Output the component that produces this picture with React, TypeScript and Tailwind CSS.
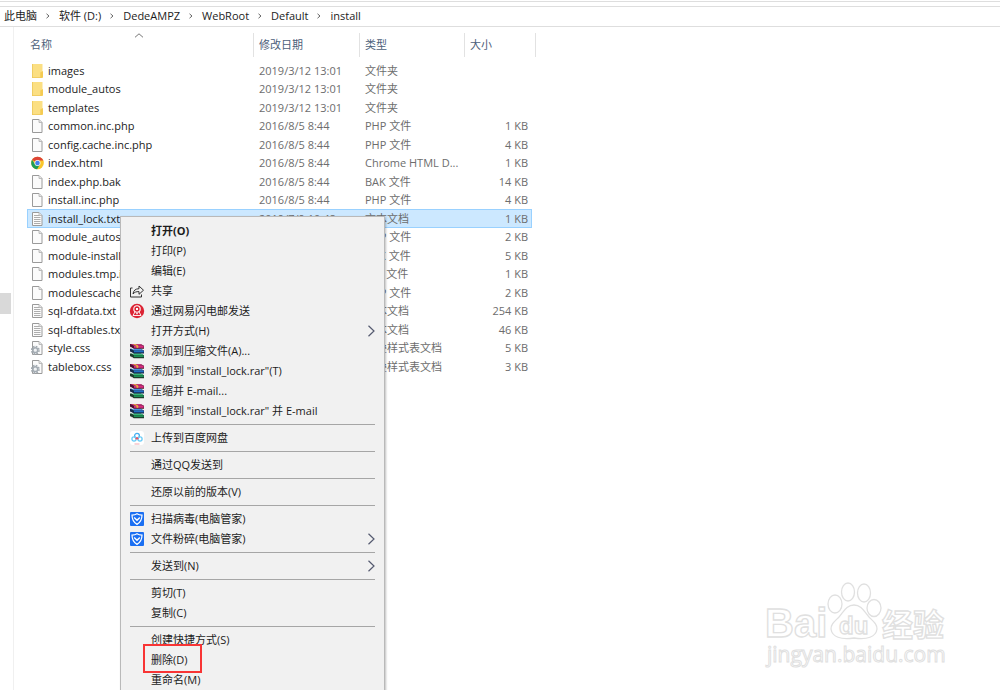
import { Fragment, ReactNode } from "react";

type FileKind = "folder" | "page" | "text" | "chrome" | "css";

interface FileEntry {
  name: string;
  kind: FileKind;
  date: string;
  type: string;
  size?: string;
  selected?: boolean;
}

interface MenuEntry {
  label: string;
  icon?: "share" | "mail" | "rar" | "cloud" | "shield";
  bold?: boolean;
  submenu?: boolean;
  marked?: boolean;
}

const crumbs = ["此电脑", "软件 (D:)", "DedeAMPZ", "WebRoot", "Default", "install"];

const files: FileEntry[] = [
  { name: "images", kind: "folder", date: "2019/3/12 13:01", type: "文件夹" },
  { name: "module_autos", kind: "folder", date: "2019/3/12 13:01", type: "文件夹" },
  { name: "templates", kind: "folder", date: "2019/3/12 13:01", type: "文件夹" },
  { name: "common.inc.php", kind: "page", date: "2016/8/5 8:44", type: "PHP 文件", size: "1 KB" },
  { name: "config.cache.inc.php", kind: "page", date: "2016/8/5 8:44", type: "PHP 文件", size: "4 KB" },
  { name: "index.html", kind: "chrome", date: "2016/8/5 8:44", type: "Chrome HTML D...", size: "1 KB" },
  { name: "index.php.bak", kind: "page", date: "2016/8/5 8:44", type: "BAK 文件", size: "14 KB" },
  { name: "install.inc.php", kind: "page", date: "2016/8/5 8:44", type: "PHP 文件", size: "4 KB" },
  { name: "install_lock.txt", kind: "text", date: "2019/7/9 10:48", type: "文本文档", size: "1 KB", selected: true },
  { name: "module_autos.php", kind: "page", date: "2016/8/5 8:44", type: "PHP 文件", size: "2 KB" },
  { name: "module-install.bak", kind: "page", date: "2016/8/5 8:44", type: "BAK 文件", size: "5 KB" },
  { name: "modules.tmp.inc", kind: "page", date: "2016/8/5 8:44", type: "INC 文件", size: "1 KB" },
  { name: "modulescache.php", kind: "page", date: "2016/8/5 8:44", type: "PHP 文件", size: "2 KB" },
  { name: "sql-dfdata.txt", kind: "text", date: "2016/8/5 8:44", type: "文本文档", size: "254 KB" },
  { name: "sql-dftables.txt", kind: "text", date: "2016/8/5 8:44", type: "文本文档", size: "46 KB" },
  { name: "style.css", kind: "css", date: "2016/8/5 8:44", type: "层叠样式表文档", size: "5 KB" },
  { name: "tablebox.css", kind: "css", date: "2016/8/5 8:44", type: "层叠样式表文档", size: "3 KB" },
];

const menuGroups: MenuEntry[][] = [
  [
    { label: "打开(O)", bold: true },
    { label: "打印(P)" },
    { label: "编辑(E)" },
    { label: "共享", icon: "share" },
    { label: "通过网易闪电邮发送", icon: "mail" },
    { label: "打开方式(H)", submenu: true },
    { label: "添加到压缩文件(A)...", icon: "rar" },
    { label: '添加到 "install_lock.rar"(T)', icon: "rar" },
    { label: "压缩并 E-mail...", icon: "rar" },
    { label: '压缩到 "install_lock.rar" 并 E-mail', icon: "rar" },
  ],
  [{ label: "上传到百度网盘", icon: "cloud" }],
  [{ label: "通过QQ发送到" }],
  [{ label: "还原以前的版本(V)" }],
  [
    { label: "扫描病毒(电脑管家)", icon: "shield" },
    { label: "文件粉碎(电脑管家)", icon: "shield", submenu: true },
  ],
  [{ label: "发送到(N)", submenu: true }],
  [{ label: "剪切(T)" }, { label: "复制(C)" }],
  [
    { label: "创建快捷方式(S)" },
    { label: "删除(D)", marked: true },
    { label: "重命名(M)" },
  ],
];

const Page = ({ children }: { children?: ReactNode }) => (
  <svg width="14" height="16" viewBox="0 0 14 16" aria-hidden="true">
    <path d="M1.5 1.500h6.500l3 3v10h-9.500z" fill="#fbfbfb" stroke="#9a9a9a" />
    <path d="M8 1.500v3h3" fill="#e4e4e4" stroke="#b0b0b0" strokeWidth="0.800" />
    {children}
  </svg>
);

const FileIcon = ({ kind }: { kind: FileKind }) => {
  if (kind === "folder") {
    return (
      <svg width="14" height="16" viewBox="0 0 14 16" aria-hidden="true">
        <path d="M1 1h10.500v14H1z" fill="#fbdf83" />
        <path d="M1 1h1v14H1z" fill="#f0cd62" />
        <path d="M1 14.200h10.500v.8H1z" fill="#efc95c" />
        <path d="M9.300 9.500L12 8v6.200L9.300 15z" fill="#f5cb52" />
      </svg>
    );
  }
  if (kind === "chrome") {
    return (
      <svg width="14" height="16" viewBox="0 0 14 16" aria-hidden="true">
        <circle cx="6.500" cy="8" r="6.300" fill="#f9c62b" />
        <path d="M6.500 8L1.040 4.850A6.300 6.300 0 0 1 11.960 4.850L12.400 5.600H6.500z" fill="#dd4437" />
        <path d="M1.040 4.850A6.300 6.300 0 0 0 6.100 14.300L8.900 9.600 6.500 8 4 9.300z" fill="#1f9d58" />
        <circle cx="6.500" cy="8" r="3" fill="#f5f5f5" />
        <circle cx="6.500" cy="8" r="2.300" fill="#4381ee" />
      </svg>
    );
  }
  if (kind === "text") {
    return (
      <Page>
        <path d="M3 4.500h5M3 6.500h6.500M3 8.500h6.500M3 10.500h6.500M3 12.500h6.500" stroke="#adadad" />
      </Page>
    );
  }
  if (kind === "css") {
    return (
      <Page>
        <circle cx="4.300" cy="10.200" r="3.700" fill="none" stroke="#a3abb2" strokeWidth="1.600" strokeDasharray="1.700 1.200" />
        <circle cx="4.300" cy="10.200" r="2.400" fill="#f0f2f4" stroke="#a3abb2" strokeWidth="1.500" />
      </Page>
    );
  }
  return <Page />;
};

const MenuIcon = ({ icon }: { icon: MenuEntry["icon"] }) => {
  switch (icon) {
    case "share":
      return (
        <svg width="16" height="16" viewBox="0 0 16 16" fill="none" stroke="#333" aria-hidden="true">
          <path d="M1.500 5v9h11v-2.500M1.500 5h2" />
          <path d="M4 11c.5-3.600 2.400-5.200 6-5.300V3l4.500 4.200L10 11.300V8.600C7.200 8.500 5.500 9.200 4 11z" />
        </svg>
      );
    case "mail":
      return (
        <svg width="16" height="16" viewBox="0 0 16 16" aria-hidden="true">
          <circle cx="8" cy="8" r="7.200" fill="#dc2434" />
          <circle cx="8" cy="6" r="3.200" fill="none" stroke="#fff" strokeWidth="1.100" />
          <path d="M7 5h2v2H7z" fill="#fff" />
          <path d="M6 8.800l-2 3.700h8l-2-3.700M7 10.700h2" fill="none" stroke="#fff" strokeWidth="0.900" />
        </svg>
      );
    case "rar":
      return (
        <svg width="16" height="16" viewBox="0 0 16 16" aria-hidden="true">
          <path d="M1 10.500h10.500l3.500 1.800v3H4.500L1 13.500z" fill="#1c3c2c" />
          <path d="M1.500 10.300h10l3.200 1.700H5z" fill="#38b878" />
          <path d="M5 12.300h9.700v1.600H5z" fill="#1e9a58" />
          <path d="M1 5.800h10.500L15 7.600v3H4.500L1 8.800z" fill="#15294a" />
          <path d="M1.500 5.700h10l3.200 1.700H5z" fill="#4a93dc" />
          <path d="M5 7.700h9.700v1.600H5z" fill="#1f6cc4" />
          <path d="M1 1h10.500L15 2.800v3H4.500L1 4z" fill="#4e0f30" />
          <path d="M1.500 1h10l3.200 1.800H5z" fill="#c9377c" />
          <path d="M5 3h9.700v1.800H5z" fill="#d62d80" />
          <path d="M1.300 4.200L4.500 6M1.300 9l3.200 1.800M1.300 13.600l3.200 1.800" stroke="#f0f0f0" strokeWidth="0.900" />
          <path d="M4 1h2.300l3 1.800v2H7.500V3z" fill="#e5b93c" />
        </svg>
      );
    case "cloud":
      return (
        <svg width="16" height="16" viewBox="0 0 16 16" fill="none" aria-hidden="true">
          <rect x="1" y="1" width="14" height="14" rx="3" fill="#fff" />
          <circle cx="8" cy="5.800" r="2.400" stroke="#45aef0" strokeWidth="1.300" />
          <circle cx="5" cy="9" r="2.100" stroke="#68cbf7" strokeWidth="1.300" />
          <circle cx="11" cy="9" r="2.100" stroke="#68cbf7" strokeWidth="1.300" />
          <path d="M6.700 9.300L8 7.800l1.300 1.500" stroke="#ee5160" strokeWidth="1.300" />
          <path d="M5.500 14h5" stroke="#f3a6ae" />
        </svg>
      );
    case "shield":
      return (
        <svg width="16" height="16" viewBox="0 0 16 16" aria-hidden="true">
          <rect x="1" y="1" width="14" height="14" rx="1" fill="#1b6ff2" />
          <path d="M8 2.800c1.600 1 3.200 1.300 5 1.300 0 4.400-1.200 7.200-5 9.300-3.800-2.100-5-4.900-5-9.300 1.800 0 3.400-.3 5-1.300z" fill="none" stroke="#fff" strokeWidth="1.200" />
          <path d="M5.200 6.500L8 9.200l2.800-2.700" fill="none" stroke="#fff" strokeWidth="1.400" />
        </svg>
      );
    default:
      return null;
  }
};

const Breadcrumb = () => (
  <nav className="mt-1 flex h-[21px] items-center border-y border-[#dedede] pb-[2px] pl-1 text-[#1c1c1c]">
    {crumbs.map((crumb, i) => (
      <Fragment key={crumb}>
        {i > 0 && (
          <svg className="mx-2" width="6" height="6" viewBox="0 0 6 6" fill="none" stroke="#666" aria-hidden="true">
            <path d="M1.500 .8L4 3 1.500 5.200" />
          </svg>
        )}
        <a href="#" className="whitespace-nowrap">{crumb}</a>
      </Fragment>
    ))}
  </nav>
);

const headCell = "mt-[6px] mb-1 flex h-6 items-center border-r border-[#e2e2e2]";

const FileTable = () => (
  <table className="w-[505px] table-fixed border-separate border-spacing-0 text-left">
    <colgroup>
      <col className="w-[227px]" />
      <col className="w-[106px]" />
      <col className="w-[105px]" />
      <col />
    </colgroup>
    <thead className="text-[#4c607a]">
      <tr>
        <th className="p-0 font-normal">
          <div className={`${headCell} relative pl-[3px]`}>
            名称
            <svg className="absolute top-0 left-[107px]" width="10" height="5" viewBox="0 0 10 5" fill="none" stroke="#777" aria-hidden="true">
              <path d="M1 4.300L5 .8l4 3.500" />
            </svg>
          </div>
        </th>
        <th className="p-0 font-normal"><div className={`${headCell} pl-[5px]`}>修改日期</div></th>
        <th className="p-0 font-normal"><div className={`${headCell} pl-[5px]`}>类型</div></th>
        <th className="p-0 font-normal"><div className={`${headCell} -mr-1 pl-[5px]`}>大小</div></th>
      </tr>
    </thead>
    <tbody>
      {files.map((file) => (
        <tr
          key={file.name + file.kind}
          className={`h-[18px] odd:h-[19px] text-[#6d6d6d] ${file.selected ? "bg-[#cce8ff] outline outline-1 -outline-offset-1 outline-[#99d1ff]" : ""}`}
        >
          <td className="p-0">
            <div className="flex items-center gap-[3px] pl-1 text-[#1c1c1c]">
              <FileIcon kind={file.kind} />
              {file.name}
            </div>
          </td>
          <td className="p-0 pl-[5px] whitespace-nowrap">{file.date}</td>
          <td className="p-0 pl-[5px] whitespace-nowrap">{file.type}</td>
          <td className="p-0 pr-1 text-right">{file.size}</td>
        </tr>
      ))}
    </tbody>
  </table>
);

const ContextMenu = () => (
  <div
    role="menu"
    className="absolute top-[216px] left-[120px] w-[265px] border border-[#b9b9b9] bg-[#f1f1f1] pt-1 pb-1 text-[#1c1c1c] shadow-[1px_1px_2px_rgba(0,0,0,0.25)]"
  >
    {menuGroups.map((group, i) => (
      <div key={i}>
        {i > 0 && <hr className="mx-[9px] my-[3px] border-[#a6a6a6]" />}
        {group.map((item) => (
          <button
            key={item.label}
            type="button"
            role="menuitem"
            className={`relative flex h-5 w-full items-center pr-2 pl-2 text-left whitespace-nowrap ${item.bold ? "font-bold" : ""}`}
          >
            <span className="w-[22px] shrink-0">
              <MenuIcon icon={item.icon} />
            </span>
            <span className="flex-1">{item.label}</span>
            {item.submenu && (
              <svg width="9" height="12" viewBox="0 0 9 12" fill="none" stroke="#555a70" strokeWidth="1.200" aria-hidden="true">
                <path d="M1.500 .8L7 6l-5.500 5.200" />
              </svg>
            )}
            {item.marked && (
              <span className="absolute -top-[6px] -bottom-[3px] left-[22px] w-[59px] border-2 border-[#f83535]" />
            )}
          </button>
        ))}
      </div>
    ))}
  </div>
);

const Watermark = () => (
  <svg
    className="absolute right-[50px] bottom-[16px]"
    width="186"
    height="94"
    viewBox="0 0 186 94"
    fill="#fff"
    stroke="#e0e0e0"
    strokeWidth="1.300"
    fontFamily='"Liberation Sans", "Noto Sans CJK SC", sans-serif'
  >
    <text x="1" y="57" fontSize="40" fontWeight="bold">Bai</text>
    <ellipse cx="71" cy="24" rx="7" ry="9" />
    <ellipse cx="84" cy="12" rx="6.500" ry="9" />
    <ellipse cx="100" cy="13" rx="6.500" ry="9" />
    <ellipse cx="110" cy="28" rx="7" ry="8.500" />
    <path d="M90 25c7 0 10 6 15 12 5 5 8 7 8 12-1 8-10 11-23 9-13 2-22-1-23-9 0-5 3-7 8-12 5-6 8-12 15-12z" />
    <text x="75" y="54" fontSize="24" fontWeight="bold">du</text>
    <text x="118" y="56" fontSize="31" fontWeight="bold">经验</text>
    <text x="3" y="82" fontSize="21" strokeWidth="1" fontFamily='"Open Sans", sans-serif'>jingyan.baidu.com</text>
  </svg>
);

const App = () => {
  return (
    <div className="relative flex h-screen flex-col overflow-hidden bg-white font-['Open_Sans','Noto_Sans_CJK_SC',sans-serif] text-[11px] leading-4">
      <header>
        <div className="h-[2px] border-b border-[#dedede]" />
        <Breadcrumb />
      </header>
      <div className="flex min-h-0 flex-1">
        <aside className="w-[14px] border-r border-[#f0f0f0] pt-[266px]">
          <div className="h-[21px] w-[11px] bg-[#d9d9d9]" />
        </aside>
        <main className="flex-1 pl-[13px]">
          <FileTable />
        </main>
      </div>
      <ContextMenu />
      <Watermark />
    </div>
  );
};

export default App;
